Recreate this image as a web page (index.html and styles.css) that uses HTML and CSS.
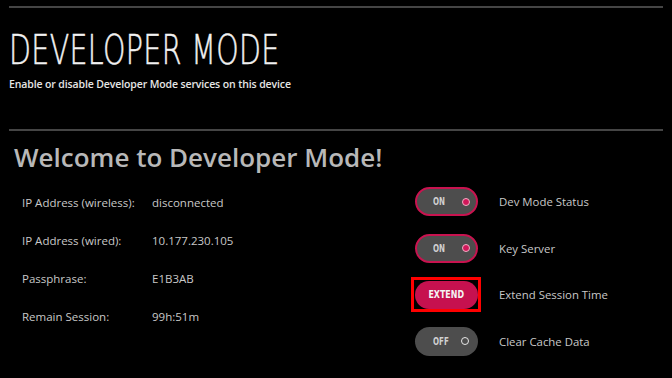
FILE: index.html
```html
<!DOCTYPE html>
<html>
<head>
<meta charset="utf-8">
<link rel="stylesheet" href="styles.css">
</head>
<body>
<div class="page">
  <header class="header">
    <h1 class="title"><span class="narrow">DEVELOPER MODE</span></h1>
    <p class="subtitle">Enable or disable Developer Mode services on this device</p>
  </header>
  <section class="content">
    <h2 class="welcome">Welcome to Developer Mode!</h2>
    <div class="columns">
      <div class="info">
        <div class="row"><div class="label">IP Address (wireless):</div><div class="value">disconnected</div></div>
        <div class="row"><div class="label">IP Address (wired):</div><div class="value">10.177.230.105</div></div>
        <div class="row"><div class="label">Passphrase:</div><div class="value">E1B3AB</div></div>
        <div class="row"><div class="label">Remain Session:</div><div class="value">99h:51m</div></div>
      </div>
      <div class="controls">
        <div class="ctrl">
          <div class="toggle on"><span class="tlabel">ON</span><span class="dot"></span></div>
          <div class="clabel">Dev Mode Status</div>
        </div>
        <div class="ctrl">
          <div class="toggle on"><span class="tlabel">ON</span><span class="dot"></span></div>
          <div class="clabel">Key Server</div>
        </div>
        <div class="ctrl">
          <div class="focus"><div class="extend"><span class="elabel">EXTEND</span></div></div>
          <div class="clabel">Extend Session Time</div>
        </div>
        <div class="ctrl">
          <div class="toggle off"><span class="tlabel">OFF</span><span class="dot"></span></div>
          <div class="clabel">Clear Cache Data</div>
        </div>
      </div>
    </div>
  </section>
</div>
</body>
</html>
```
FILE: styles.css
```css
html, body {
  margin: 0;
  padding: 0;
  background: #000;
  width: 672px;
  height: 378px;
  overflow: hidden;
}
.page {
  margin: 6px 9px 0 9px;
  width: 654px;
  font-family: "Open Sans", "Noto Sans", sans-serif;
}
.header {
  border-top: 2px solid #454545;
  border-bottom: 2px solid #454545;
  height: 121px;
  box-sizing: content-box;
}
.title {
  margin: 0;
  padding-top: 20px;
  font-family: "DejaVu Sans", sans-serif;
  font-weight: 200;
  font-size: 41px;
  line-height: 44px;
  color: #f2f2f2;
  white-space: nowrap;
  -webkit-text-stroke: 0.5px #f2f2f2;
}
.narrow {
  display: inline-block;
  transform: scaleX(0.695);
  transform-origin: left center;
  letter-spacing: 0.5px;
}
.subtitle {
  margin: 5px 0 0 0;
  font-size: 10.5px;
  font-weight: 600;
  line-height: 14px;
  color: #e6e6e6;
  letter-spacing: -0.12px;
}
.content {
  padding-left: 5px;
}
.welcome {
  margin: 9px 0 0 0;
  font-size: 26px;
  font-weight: 600;
  line-height: 34px;
  color: #b8b8b8;
}
.columns {
  display: flex;
  margin-top: 10px;
}
.info {
  display: flex;
  flex-direction: column;
  padding-left: 8px;
  width: 393px;
  font-size: 11.5px;
  color: #c8c8c8;
}
.row {
  display: flex;
  align-items: center;
  height: 38px;
}
.label {
  width: 130px;
  flex: none;
  line-height: 16px;
}
.value {
  line-height: 16px;
}
.controls {
  display: flex;
  flex-direction: column;
  gap: 17.5px;
  margin-top: 3px;
}
.ctrl {
  display: flex;
  align-items: center;
  gap: 21px;
  height: 29px;
}
.clabel {
  font-size: 11.4px;
  color: #c8c8c8;
}
.toggle {
  width: 63px;
  height: 29px;
  box-sizing: border-box;
  border-radius: 15px;
  background: #4d4d4d;
  display: flex;
  align-items: center;
}
.toggle.on {
  border: 2px solid #c8134f;
}
.tlabel {
  display: inline-block;
  font-family: "DejaVu Sans Condensed", "DejaVu Sans", sans-serif;
  font-weight: bold;
  font-size: 11px;
  color: #d0d0d0;
  margin-left: 16px;
  transform: scaleX(0.72);
  transform-origin: left center;
}
.toggle.off .tlabel {
  margin-left: 18px;
}
.dot {
  margin-left: auto;
  box-sizing: border-box;
  border-radius: 50%;
  width: 8px;
  height: 8px;
}
.toggle.on .dot {
  background: #d0185a;
  border: 1px solid #f0b0c4;
  margin-right: 6px;
}
.toggle.off .dot {
  border: 1.5px solid #e8e8e8;
  margin-right: 9px;
}
.focus {
  width: 70px;
  height: 35px;
  box-sizing: border-box;
  border: 3px solid #ff0000;
  margin-left: -4px;
  margin-right: -3px;
  display: flex;
  align-items: center;
  justify-content: center;
}
.extend {
  width: 63px;
  height: 28px;
  border-radius: 14px;
  background: #c6114f;
  display: flex;
  align-items: center;
  justify-content: center;
}
.elabel {
  display: inline-block;
  font-family: "DejaVu Sans Condensed", "DejaVu Sans", sans-serif;
  font-weight: bold;
  font-size: 11px;
  color: #f4f4f4;
  transform: scaleX(0.8);
}
```
